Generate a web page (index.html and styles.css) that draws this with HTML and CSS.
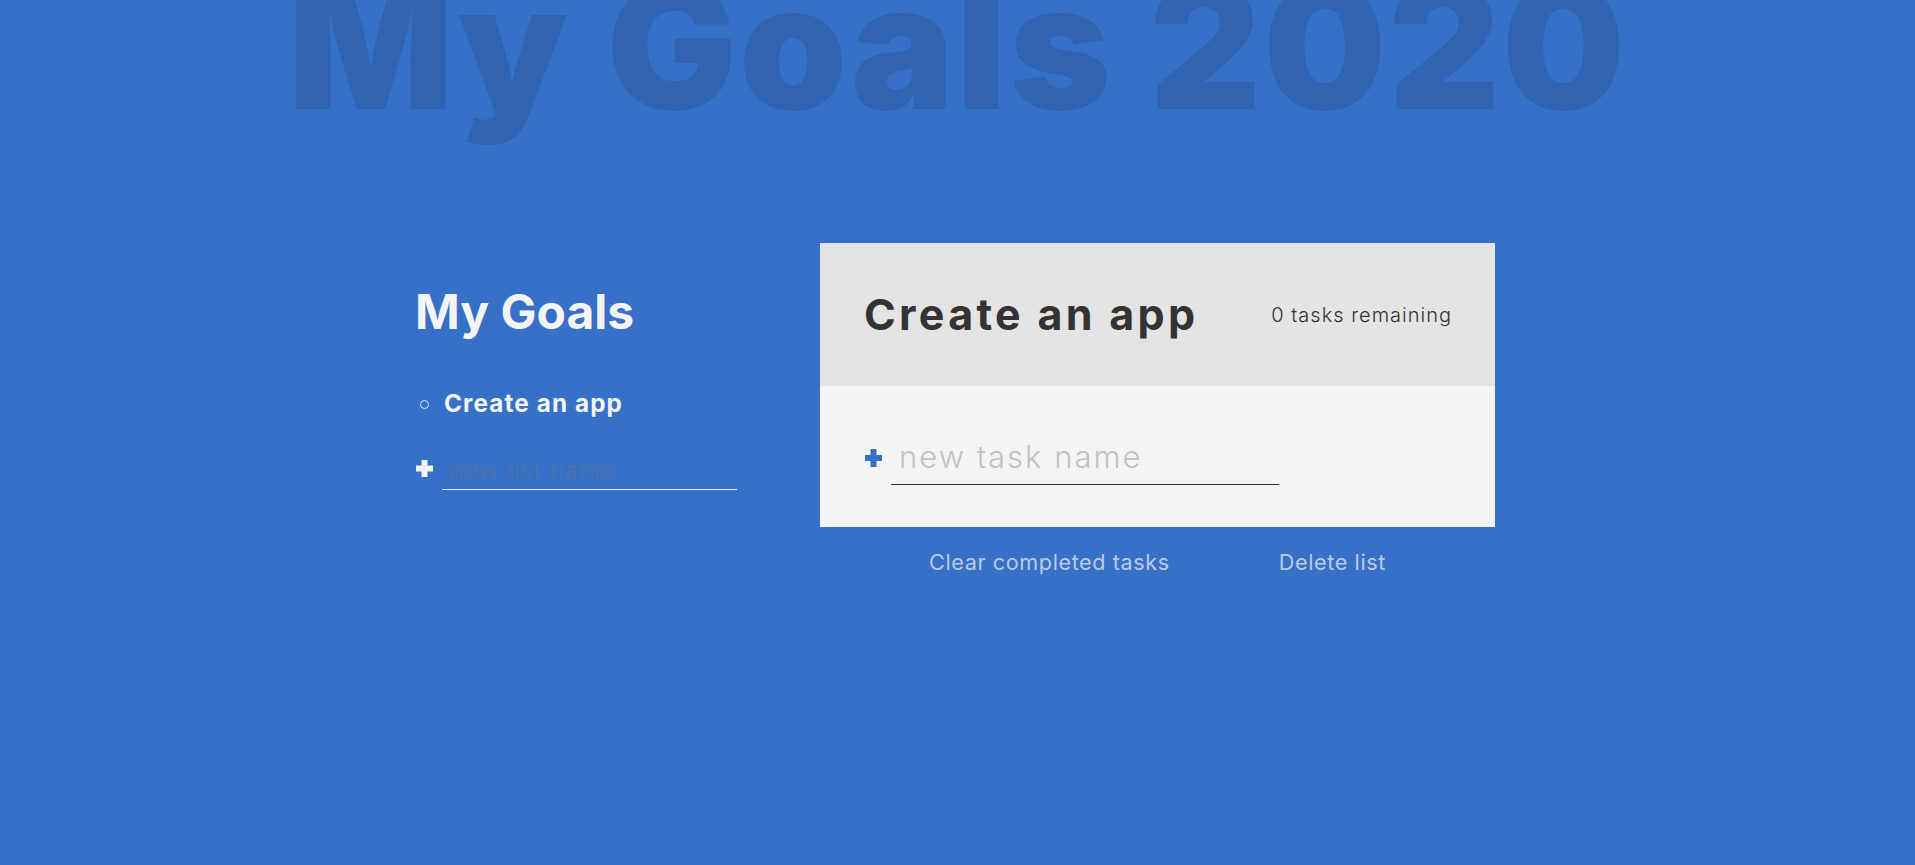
FILE: index.html
```html
<!DOCTYPE html>
<html lang="en">
<head>
<meta charset="utf-8">
<title>My Goals 2020</title>
<link rel="stylesheet" href="styles.css">
</head>
<body>
<h1 class="title">My Goals 2020</h1>
<div class="layout">
  <div class="all-tasks">
    <h2 class="task-list-title">My Goals</h2>
    <ul class="task-list">
      <li class="list-name active-list"><span class="bullet"></span>Create an app</li>
    </ul>
    <form class="new-form list-form">
      <button class="btn create light" type="button" aria-label="create new list">
        <svg width="17" height="17" viewBox="0 0 17 17"><path d="M5.5 0h6v5.5H17v6h-5.5V17h-6v-5.5H0v-6h5.5z" fill="currentColor"/></svg>
      </button>
      <input class="new list-input" type="text" placeholder="new list name">
    </form>
  </div>
  <div class="todo-column">
    <div class="todo-list">
      <div class="todo-header">
        <h2 class="list-title">Create an app</h2>
        <p class="task-count">0 tasks remaining</p>
      </div>
      <div class="todo-body">
        <form class="new-form task-form">
          <button class="btn create primary" type="button" aria-label="create new task">
            <svg width="17" height="18" viewBox="0 0 17 18"><path d="M5.5 0h6v6H17v6h-5.5v6h-6v-6H0V6h5.5z" fill="currentColor"/></svg>
          </button>
          <input class="new task-input" type="text" placeholder="new task name">
        </form>
      </div>
    </div>
    <div class="delete-stuff">
      <button class="btn delete" type="button">Clear completed tasks</button>
      <button class="btn delete" type="button">Delete list</button>
    </div>
  </div>
</div>
</body>
</html>
```
FILE: styles.css
```css
:root {
  --clr-primary: rgb(54, 112, 199);
  --clr-light: #f4f4f4;
  --clr-dark: #333;
}

* { box-sizing: border-box; }

html, body {
  height: 100%;
}

body {
  margin: 0;
  font-family: Inter, "Open Sans", sans-serif;
  font-weight: 300;
  background-color: var(--clr-primary);
  color: var(--clr-light);
  overflow: hidden;
}

.title {
  text-align: center;
  font-size: 173px;
  line-height: 1;
  font-weight: 900;
  color: rgba(0, 0, 0, 0.1);
  letter-spacing: 2px;
  margin: -40px 0 110px;
  white-space: nowrap;
}

.layout {
  display: flex;
  justify-content: center;
  padding-right: 5px;
}

.all-tasks {
  width: 405px;
}

.task-list-title {
  margin: 45px 0 0;
  font-size: 48px;
  line-height: 1;
  font-weight: 700;
}

.task-list {
  list-style: none;
  margin: 55px 0 0;
  padding: 0;
  font-size: 24.3px;
  line-height: 1;
}

.list-name {
  display: flex;
  align-items: center;
  font-weight: 700;
  letter-spacing: 1.1px;
}

.bullet {
  width: 9px;
  height: 9px;
  border: 1px solid #dfe6f2;
  border-radius: 50%;
  margin: 3px 15px 0 5px;
}

.new-form {
  display: flex;
  align-items: center;
  margin: 0;
}

.list-form {
  margin-top: 31px;
}

.btn {
  cursor: pointer;
  background: 0;
  border: 0;
  padding: 0;
  color: inherit;
  font-family: inherit;
}

.btn.create {
  display: flex;
  margin-right: 9px;
}

.btn.create svg { display: block; }

.light { color: var(--clr-light); margin-left: 1px; }
.primary { color: var(--clr-primary); }

.new {
  background: transparent;
  border: 0;
  color: inherit;
  border-bottom: 1px solid currentColor;
  outline: none;
  font-family: inherit;
  font-weight: 300;
  box-sizing: content-box;
}

.list-input {
  width: 281px;
  font-size: 24px;
  height: 24px;
  padding: 7px;
  margin-top: 5px;
  letter-spacing: 1px;
}

.list-input::placeholder {
  color: #4f72a6;
  opacity: 1;
}

.todo-column {
  width: 675px;
}

.todo-list {
  background: var(--clr-light);
  color: var(--clr-dark);
}

.todo-header {
  height: 143px;
  padding: 0 43px 0 44px;
  background: #e4e4e4;
  display: flex;
  align-items: center;
  justify-content: space-between;
}

.list-title {
  margin: 0 1em 0 0;
  font-size: 43px;
  line-height: 1;
  font-weight: 700;
  letter-spacing: 3.3px;
}

.task-count {
  margin: 0;
  font-size: 20px;
  line-height: 1;
  font-weight: 300;
  letter-spacing: 1px;
}

.todo-body {
  height: 141px;
  padding: 55px 43px 0 45px;
}

.task-form .btn.create {
  margin-bottom: 10px;
}

.task-input {
  width: 372px;
  font-size: 31px;
  height: 31px;
  padding: 0 8px 12px 8px;
  color: var(--clr-dark);
  letter-spacing: 2px;
}

.task-input::placeholder {
  color: #c1c1c1;
  opacity: 1;
}

.delete-stuff {
  display: flex;
  justify-content: space-evenly;
  margin-top: 25px;
}

.btn.delete {
  font-size: 21.6px;
  line-height: 1;
  font-weight: 400;
  letter-spacing: 0.6px;
  color: rgba(244, 244, 244, 0.7);
}
```
